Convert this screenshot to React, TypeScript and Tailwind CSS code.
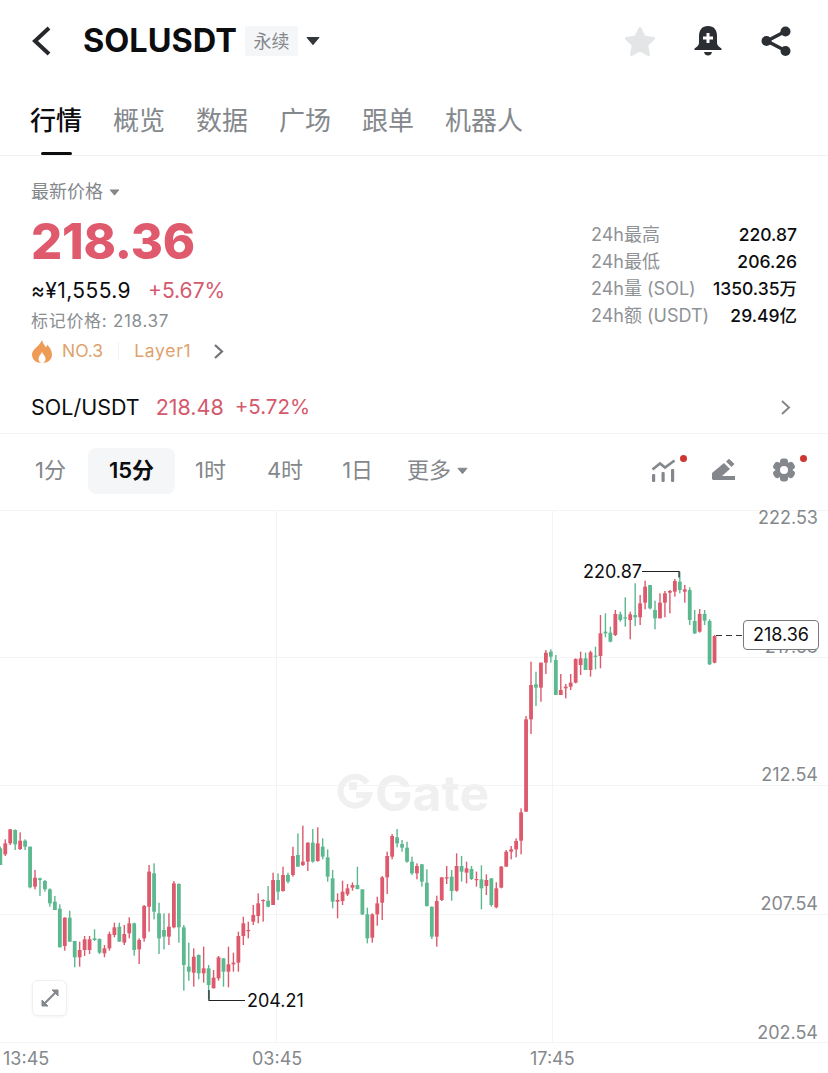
import React from 'react';

type Row = ['r' | 'g', number, number, number, number];

// candle rows read off the chart: colour, wick top, body top, body bottom, wick bottom
const partA: Row[] = [
  ['g',110,115,165,165],['r',88,100,133,138],['r',57,58,100,105],['g',58,60,103,120],['r',67,92,117,120],['g',88,92,110,120],
  ['g',110,110,232,235],['r',180,203,230,238],['g',203,205,210,258],['g',210,213,238,245],['g',235,238,280,290],['g',258,275,300,300],
  ['g',283,296,412,412],['r',322,323,408,422],['g',302,323,395,395],['g',393,393,442,472],['r',395,420,442,470],['r',378,388,420,438],
  ['r',378,388,420,432],['g',358,385,390,393],['g',385,387,428,432],['r',405,415,430,442],['r',365,372,415,422],['r',338,352,375,382],
  ['g',338,350,395,395],['r',345,372,398,405],['r',322,340,370,385],['g',338,340,420,437],['r',385,390,418,462],['r',285,288,385,395],
  ['r',165,185,290,365],['g',160,190,305,328],['g',278,310,385,432],['g',310,360,380,418],['r',310,350,380,405],['r',213,220,352,355],
  ['g',220,222,352,398],['g',345,352,465,542],['g',398,470,485,512],['r',415,440,488,530],['g',433,435,490,508],['r',410,475,490,518],
  ['g',465,475,525,568],['r',480,503,535,535],['r',438,442,505,512],['g',445,445,485,530],['r',410,463,485,532],['r',428,458,463,485],
  ['r',365,378,458,485],['r',320,340,378,405],['r',335,360,363,385],['r',285,315,335,345],['r',250,280,318,340],['r',268,270,273,335],
  ['g',228,272,290,292],['r',188,210,285,285],['g',190,210,245,270],
];

const partB: Row[] = [
  ['r',320,345,393,395],['g',338,345,365,370],['r',260,288,345,350],['g',220,285,320,320],['r',197,305,315,318],['r',247,248,305,333],
  ['g',207,248,305,308],['r',202,250,303,305],['g',235,260,290,298],['g',268,292,350,365],['g',330,355,425,445],['r',400,420,425,475],
  ['r',362,395,423,435],['r',372,385,403,408],['r',367,375,383,392],['g',320,375,387,388],['g',388,388,463,465],['g',443,463,535,550],
  ['r',460,463,533,548],['r',410,430,463,497],['r',348,352,428,480],['r',275,288,352,402],['r',222,228,290,298],['g',207,232,250,262],
  ['g',240,252,263,275],['g',245,263,305,308],['g',290,305,340,345],['r',310,318,340,358],['g',312,313,365,380],['g',328,368,438,440],
  ['g',440,440,530,537],['r',407,423,530,560],['r',352,352,420,423],['r',318,352,355,372],['g',330,350,393,422],['r',280,318,392,395],
  ['g',288,318,335,365],['r',305,325,338,370],['g',318,327,357,360],['r',335,357,360,380],['g',316,358,385,448],['r',343,360,378,405],
  ['g',355,355,435,440],['r',367,385,442,445],['r',318,320,383,385],['r',270,275,320,320],['r',258,268,275,298],['r',235,243,268,292],
  ['r',145,157,242,283],
];

const partC: Row[] = [
  ['r',228,238,515,515],['r',65,135,238,282],['g',95,133,143,198],['r',68,68,143,185],['r',30,38,68,102],['g',28,35,50,68],['g',45,60,165,165],
];

const partD: Row[] = [
  ['r',492,540,555,555],['r',522,530,535,565],['r',492,518,530,540],['r',445,447,518,520],['r',425,445,465,495],['g',428,445,480,480],
  ['r',422,427,480,500],['g',410,437,440,478],['r',315,370,438,475],['g',310,365,370,382],['g',350,368,395,397],['r',300,312,375,378],
  ['g',305,313,330,335],['g',262,322,325,350],['r',305,313,330,388],['g',220,315,322,348],['r',255,280,322,345],['r',212,230,278,298],
  ['g',225,225,295,298],['g',272,300,325,358],['r',250,278,325,325],['r',243,250,278,322],['r',240,243,248,310],['r',207,213,245,260],
  ['g',185,215,240,250],['r',225,238,245,278],['g',232,240,330,345],['g',300,333,370,372],['r',297,312,365,368],['g',300,312,332,345],
  ['g',328,333,463,465],['r',375,378,458,460],
];

const scale = (rows: Row[], top: number): Row[] =>
  rows.map(([c, a, b, d, e]) => [c, top + a / 3, top + b / 3, top + d / 3, top + e / 3]);

const candles = [...scale(partA, 810), ...scale(partB, 760), ...scale(partC, 640), ...scale(partD, 510)];

const tabs = ['行情', '概览', '数据', '广场', '跟单', '机器人'];
const stats = [
  ['24h最高', '220.87'],
  ['24h最低', '206.26'],
  ['24h量 (SOL)', '1350.35万'],
  ['24h额 (USDT)', '29.49亿'],
];

const Caret = ({ className }: { className: string }) => (
  <svg className={className} viewBox="0 0 12 8">
    <path d="M1 1h10L6 7z" fill="currentColor" stroke="currentColor" strokeLinejoin="round" />
  </svg>
);

const Chart = () => (
  <svg className="absolute inset-0" width={828} height={563} viewBox="0 510 828 563">
    {[510, 657, 785, 914, 1042].map((y) => (
      <line key={y} x1={0} x2={828} y1={y + 0.5} y2={y + 0.5} stroke="#f4f4f5" />
    ))}
    {[276, 552].map((x) => (
      <line key={x} x1={x + 0.5} x2={x + 0.5} y1={510} y2={1042} stroke="#f4f4f5" />
    ))}
    {/* watermark logo */}
    <path d="M367 783a14.500 14.500 0 1 0 2 12h-13" fill="none" stroke="#f0f0f1" strokeWidth={6} />
    <rect x={349} y={782} width={8} height={8} fill="#f0f0f1" />
    {candles.map(([c, wt, bt, bb, wb], i) => {
      const x = i * 4.96 + 0.3;
      const color = c === 'r' ? '#dd5a6d' : '#5cb88f';
      return (
        <g key={i} fill={color}>
          <rect x={x - 0.7} y={wt} width={1.4} height={wb - wt} />
          <rect x={x - 1.9} y={bt} width={3.8} height={Math.max(bb - bt, 1.2)} />
        </g>
      );
    })}
    <path d="M642 571.5h37v6" fill="none" stroke="#222" strokeWidth={1.2} />
    <path d="M209 990v10.5h36" fill="none" stroke="#222" strokeWidth={1.2} />
    <line x1={716} x2={742} y1={635.5} y2={635.5} stroke="#333" strokeWidth={1.2} strokeDasharray="6 4" />
  </svg>
);

export default function App() {
  return (
    <div className="w-[828px] h-[1073px] overflow-hidden bg-white flex flex-col [font-family:Inter,'Noto_Sans_CJK_SC',sans-serif]">
      {/* top bar */}
      <div className="h-[82px] flex items-center pl-[31px] pr-[37px] shrink-0">
        <svg width={22} height={32} viewBox="0 0 22 32" fill="none" stroke="#26282c" strokeWidth={4} className="shrink-0">
          <path d="M18 3L4 16l14 13" />
        </svg>
        <span className="ml-[30px] text-[32.5px] font-bold text-[#0c0d0f] leading-none">SOLUSDT</span>
        <span className="ml-[8px] w-[53px] h-[30px] bg-[#f5f6f8] rounded-[2px] flex items-center justify-center text-[18px] text-[#84888c]">永续</span>
        <Caret className="ml-[8px] w-[14px] h-[10px] text-[#33363a]" />
        <div className="ml-auto flex items-center">
          <svg width={32} height={31} viewBox="0 0 32 31">
            <path d="M16 2.5l4.2 8.6 9.3 1.3-6.8 6.6 1.7 9.4-8.4-4.5-8.4 4.5 1.7-9.4-6.8-6.6 9.3-1.3z" fill="#e3e5e6" stroke="#e3e5e6" strokeWidth={3} strokeLinejoin="round" />
          </svg>
          <svg className="ml-[38px]" width={28} height={30} viewBox="0 0 28 30">
            <path d="M14 0C8 0 5 4 5 10v7c0 2-2 4-4.500 5.500V24h27v-1.500C25 21 23 19 23 17v-7c0-6-3-10-9-10z" fill="#2b2e33" />
            <path d="M10 26h8c-.5 2.500-2 3.500-4 3.500s-3.500-1-4-3.500z" fill="#2b2e33" />
            <path d="M12.500 7h3v3.500H19v3h-3.500V17h-3v-3.500H9v-3h3.500z" fill="#fff" />
          </svg>
          <svg className="ml-[39px]" width={30} height={30} viewBox="0 0 30 30">
            <path d="M24 5.500L6 15l18 9.500" fill="none" stroke="#2b2e33" strokeWidth={3.500} />
            <circle cx={24.500} cy={5.500} r={5} fill="#2b2e33" />
            <circle cx={5.500} cy={15} r={5} fill="#2b2e33" />
            <circle cx={24.500} cy={25} r={5} fill="#2b2e33" />
          </svg>
        </div>
      </div>

      {/* tabs */}
      <div className="h-[74px] shrink-0 flex gap-[31px] pl-[30px] pt-[20px] border-b border-[#f1f2f3]">
        {tabs.map((t, i) => (
          <div key={t} className="relative h-[53px]">
            <span className={`text-[26px] leading-[37px] ${i === 0 ? 'font-medium text-[#0c0d0f]' : 'text-[#84888c]'}`}>{t}</span>
            {i === 0 && <div className="absolute left-[11px] bottom-0 w-[31px] h-[3px] rounded-full bg-[#0c0d0f]" />}
          </div>
        ))}
      </div>

      {/* price block */}
      <div className="h-[277px] shrink-0 flex justify-between pl-[31px] pr-[31px] relative">
        <div className="flex flex-col">
          <div className="mt-[22px] flex items-center gap-[6px] text-[18px] leading-[28px] text-[#84888c]">
            最新价格
            <Caret className="w-[11px] h-[7px] text-[#84888c]" />
          </div>
          <div className="mt-[7px] text-[49px] leading-[58px] font-extrabold text-[#df5a6c] tracking-[-0.2px]">218.36</div>
          <div className="mt-[6px] flex items-center gap-[17px] text-[21px] leading-[28px]">
            <span className="text-[#0c0d0f] tracking-[0.4px]">≈¥1,555.9</span>
            <span className="text-[#d4596d]">+5.67%</span>
          </div>
          <div className="mt-[3px] text-[17px] leading-[26px] text-[#8a8e92] tracking-[0.7px]">标记价格: 218.37</div>
          <div className="mt-[4px] flex items-center text-[17.5px] leading-[26px] text-[#e0a26c]">
            <svg width={20} height={23} viewBox="0 0 20 23" className="ml-[1px]">
              <path d="M10 0c1 4 2.500 5 4 7.500.7-1 1-2 1-3 3 3 5 6.500 5 10 0 5-4 8.500-10 8.500S0 19.500 0 14.500C0 9 8 6 10 0z" fill="#ee9b55" />
              <path d="M10 12c-1 2.500-3.500 4-3.500 7 0 2 1.500 4 3.500 4s3.500-2 3.500-4c0-3-2.500-4.500-3.500-7z" fill="#fff" />
            </svg>
            <span className="ml-[10px]">NO.3</span>
            <span className="mx-[15px] w-px h-[18px] bg-[#f1f2f3]" />
            <span className="tracking-[0.7px]">Layer1</span>
            <svg className="ml-[21px]" width={13} height={17} viewBox="0 0 13 17" fill="none" stroke="#6f7276" strokeWidth={2.200}>
              <path d="M3 2l7 6.500L3 15" />
            </svg>
          </div>
          <div className="mt-[29px] flex items-center text-[20.5px] leading-[28px]">
            <span className="text-[#0c0d0f] text-[21.5px]">SOL/USDT</span>
            <span className="ml-[16px] text-[#d4596d] text-[21.5px]">218.48</span>
            <span className="ml-[11px] text-[#d4596d]">+5.72%</span>
          </div>
        </div>
        <div className="mt-[65px] w-[206px] flex flex-col text-[18px] leading-[27px]">
          {stats.map(([k, v]) => (
            <div key={k} className="flex justify-between">
              <span className="text-[#8f9296]">{k}</span>
              <span className="text-[#0c0d0f] font-medium text-[17.5px]">{v}</span>
            </div>
          ))}
        </div>
        <svg className="absolute left-[779px] top-[243px]" width={13} height={17} viewBox="0 0 13 17" fill="none" stroke="#84888c" strokeWidth={2}>
          <path d="M3 2l7 6.500L3 15" />
        </svg>
      </div>

      {/* interval row */}
      <div className="h-[77px] shrink-0 border-t border-[#f4f4f5] pb-[3px] flex items-center text-[22px] text-[#84888c]">
        <span className="ml-[35px]">1分</span>
        <span className="ml-[22px] w-[87px] h-[46px] rounded-[8px] bg-[#f5f6f8] flex items-center justify-center font-semibold text-[#0c0d0f]">15分</span>
        <span className="ml-[20px]">1时</span>
        <span className="ml-[41px]">4时</span>
        <span className="ml-[39px]">1日</span>
        <span className="ml-[34px]">更多</span>
        <Caret className="ml-[6px] w-[11px] h-[8px] text-[#84888c]" />
        <div className="ml-auto flex items-start pr-[32px]">
          <div className="relative w-[25px] h-[25px]">
            <svg width={25} height={25} viewBox="0 0 25 25">
              <path d="M1.500 11.500L9 5.500l5 4L23.500 2.500" fill="none" stroke="#84888c" strokeWidth={2.600} />
              <rect x={1} y={16} width={3.200} height={8} rx={1} fill="#84888c" />
              <rect x={10.500} y={14} width={3.200} height={10} rx={1} fill="#84888c" />
              <rect x={20} y={11} width={3.200} height={13} rx={1} fill="#84888c" />
            </svg>
            <span className="absolute left-[29px] -top-[3px] w-[7px] h-[7px] rounded-full bg-[#d0342f]" />
          </div>
          <svg className="ml-[36px]" width={24} height={24} viewBox="0 0 24 24">
            <path d="M0 15L12 5l6 6-8 7h13v4H1l-1-1z" fill="#84888c" />
            <path d="M14 3.500L17 .8l5.500 5.200-3 3z" fill="#84888c" />
          </svg>
          <div className="relative ml-[36px] w-[24px] h-[24px]">
            <svg width={24} height={24} viewBox="0 0 24 24">
              <g fill="#84888c">
                <rect x={8} y={0.500} width={8} height={23} rx={3} />
                <rect x={8} y={0.500} width={8} height={23} rx={3} transform="rotate(60 12 12)" />
                <rect x={8} y={0.500} width={8} height={23} rx={3} transform="rotate(120 12 12)" />
                <circle cx={12} cy={12} r={8.500} />
              </g>
              <circle cx={12} cy={12} r={4} fill="#fff" />
            </svg>
            <span className="absolute left-[28px] -top-[3px] w-[7px] h-[7px] rounded-full bg-[#d0342f]" />
          </div>
        </div>
      </div>

      {/* chart */}
      <div className="relative flex-1 text-[18px] leading-[24px] text-[#85888c]">
        <div className="absolute left-[375px] top-[253px] text-[50px] leading-[60px] font-bold text-[#f0f0f1]">Gate</div>
        <Chart />
        <span className="absolute right-[10px] top-[-4px]">222.53</span>
        <span className="absolute right-[10px] top-[125px]">217.53</span>
        <span className="absolute right-[10px] top-[253px]">212.54</span>
        <span className="absolute right-[10px] top-[382px]">207.54</span>
        <span className="absolute right-[10px] top-[511px]">202.54</span>
        <span className="absolute left-[3px] top-[537px]">13:45</span>
        <span className="absolute left-[252px] top-[537px]">03:45</span>
        <span className="absolute left-[530px] top-[537px]">17:45</span>
        <span className="absolute left-[583px] top-[50px] text-[#0c0d0f]">220.87</span>
        <span className="absolute left-[247px] top-[479px] text-[#0c0d0f]">204.21</span>
        <div className="absolute left-[743px] top-[110px] w-[76px] h-[30px] bg-white border border-[#77797c] rounded-[4px] flex items-center justify-center text-[#0c0d0f]">218.36</div>
        <div className="absolute left-[32px] top-[470px] w-[35px] h-[36px] rounded-[6px] bg-white border border-[#f0f0f1] shadow-[0_1px_3px_rgba(0,0,0,0.06)] flex items-center justify-center">
          <svg width={20} height={20} viewBox="0 0 20 20" fill="#84888c" stroke="#84888c">
            <path d="M12 2h6v6zM2 18v-6l6 6z" />
            <path d="M15 5L5 15" strokeWidth={2.200} />
          </svg>
        </div>
      </div>
    </div>
  );
}
